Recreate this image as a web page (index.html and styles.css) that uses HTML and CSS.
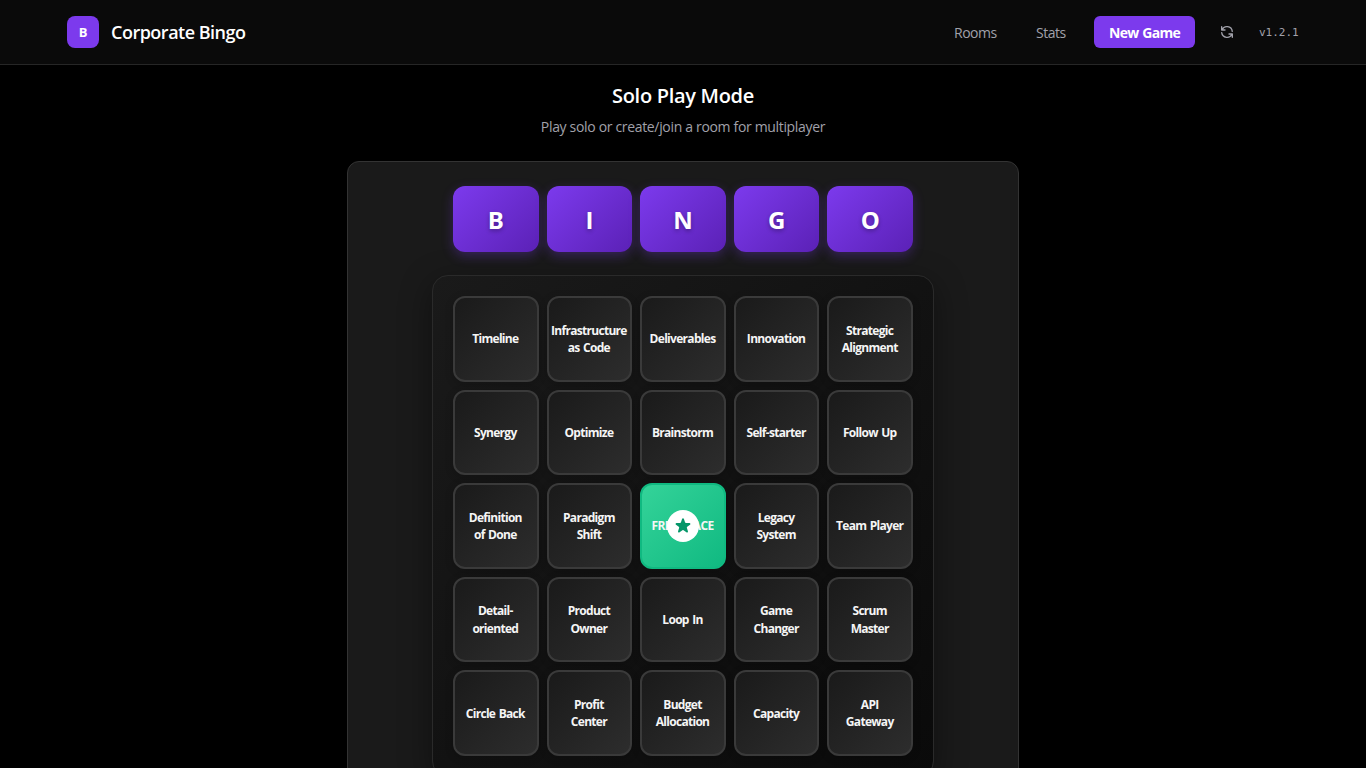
FILE: index.html
```html
<!DOCTYPE html>
<html lang="en">
<head>
<meta charset="utf-8">
<title>Corporate Bingo</title>
<link rel="stylesheet" href="styles.css">
</head>
<body>
<header class="topbar">
  <div class="brand"><span class="logo">B</span><span class="brand-name">Corporate Bingo</span></div>
  <nav class="nav">
    <a class="link rooms">Rooms</a>
    <a class="link stats">Stats</a>
    <button class="new-game"><span>New Game</span></button>
    <button class="refresh" aria-label="Refresh">
      <svg width="16" height="16" viewBox="0 0 24 24" fill="none" stroke="currentColor" stroke-width="2"><path d="M4 4v5h.582m15.356 2A8.001 8.001 0 004.582 9m0 0H9m11 11v-5h-.581m0 0a8.003 8.003 0 01-15.357-2m15.357 2H15" stroke-linecap="round" stroke-linejoin="round"/></svg>
    </button>
    <span class="version">v1.2.1</span>
  </nav>
</header>
<main class="main">
  <h1 class="title"><span>Solo Play Mode</span></h1>
  <p class="subtitle"><span>Play solo or create/join a room for multiplayer</span></p>
  <section class="panel">
    <div class="letters">
      <div class="letter">B</div><div class="letter">I</div><div class="letter">N</div><div class="letter">G</div><div class="letter">O</div>
    </div>
    <div class="board">
      <div class="cell"><span>Timeline</span></div>
      <div class="cell"><span>Infrastructure<br>as Code</span></div>
      <div class="cell"><span>Deliverables</span></div>
      <div class="cell"><span>Innovation</span></div>
      <div class="cell"><span>Strategic<br>Alignment</span></div>
      <div class="cell"><span>Synergy</span></div>
      <div class="cell"><span>Optimize</span></div>
      <div class="cell"><span>Brainstorm</span></div>
      <div class="cell"><span>Self-starter</span></div>
      <div class="cell"><span>Follow Up</span></div>
      <div class="cell"><span>Definition<br>of Done</span></div>
      <div class="cell"><span>Paradigm<br>Shift</span></div>
      <div class="cell free"><span>FREE SPACE</span>
        <div class="badge"><svg width="20" height="20" viewBox="0 0 20 20" fill="currentColor"><path d="M9.049 2.927c.3-.921 1.603-.921 1.902 0l1.07 3.292a1 1 0 00.95.69h3.462c.969 0 1.371 1.24.588 1.81l-2.8 2.034a1 1 0 00-.364 1.118l1.07 3.292c.3.921-.755 1.688-1.54 1.118l-2.8-2.034a1 1 0 00-1.175 0l-2.8 2.034c-.784.57-1.838-.197-1.539-1.118l1.07-3.292a1 1 0 00-.364-1.118L2.98 8.72c-.783-.57-.38-1.81.588-1.81h3.461a1 1 0 00.951-.69l1.07-3.292z"/></svg></div>
      </div>
      <div class="cell"><span>Legacy<br>System</span></div>
      <div class="cell"><span>Team Player</span></div>
      <div class="cell"><span>Detail-<br>oriented</span></div>
      <div class="cell"><span>Product<br>Owner</span></div>
      <div class="cell"><span>Loop In</span></div>
      <div class="cell"><span>Game<br>Changer</span></div>
      <div class="cell"><span>Scrum<br>Master</span></div>
      <div class="cell"><span>Circle Back</span></div>
      <div class="cell"><span>Profit<br>Center</span></div>
      <div class="cell"><span>Budget<br>Allocation</span></div>
      <div class="cell"><span>Capacity</span></div>
      <div class="cell"><span>API<br>Gateway</span></div>
    </div>
  </section>
</main>
</body>
</html>
```
FILE: styles.css
```css
* { box-sizing: border-box; }
body {
  margin: 0;
  height: 768px;
  overflow: hidden;
  background: #000;
  color: #fff;
  font-family: "Open Sans", "Noto Sans", sans-serif;
}
button { border: 0; padding: 0; font: inherit; color: inherit; background: none; }
.topbar {
  height: 65px;
  padding: 0 67px;
  display: flex;
  justify-content: space-between;
  align-items: center;
  background: #0a0a0a;
  border-bottom: 1px solid #262626;
}
.brand { display: flex; align-items: center; gap: 12px; }
.logo {
  width: 32px;
  height: 32px;
  border-radius: 8px;
  background: #7c3aed;
  display: flex;
  align-items: center;
  justify-content: center;
  font-size: 13px;
  font-weight: 700;
}
.brand-name { font-size: 18px; font-weight: 600; letter-spacing: -0.5px; white-space: nowrap; }
.nav { display: flex; align-items: center; color: #a1a1aa; font-size: 14px; }
.link { letter-spacing: -0.5px; white-space: nowrap; }
.rooms { width: 82px; }
.stats { width: 58px; }
.new-game {
  width: 101px;
  height: 32px;
  border-radius: 6px;
  background: #7c3aed;
  color: #fff;
  font-weight: 700;
  letter-spacing: -0.75px;
  word-spacing: 1px;
  white-space: nowrap;
}
.refresh { width: 64px; height: 32px; display: flex; align-items: center; justify-content: center; }
.version { width: 40px; font-family: "DejaVu Sans Mono", monospace; font-size: 11px; }
.main { display: flex; flex-direction: column; align-items: center; padding-top: 17px; }
.title { margin: 0; font-size: 20px; line-height: 28px; font-weight: 600; letter-spacing: -0.3px; }
.subtitle { margin: 7px 0 24px; font-size: 14px; line-height: 20px; color: #a1a1aa; letter-spacing: -0.33px; }
.panel {
  width: 672px;
  height: 650px;
  padding: 24px 84px;
  border: 1px solid #333;
  border-radius: 12px;
  background: #1a1a1a;
}
.letters { display: grid; grid-template-columns: repeat(5, 1fr); gap: 8px; margin: 0 21px 23px; }
.letter {
  height: 66px;
  border-radius: 12px;
  background: linear-gradient(135deg, #7c3aed, #5b21b6);
  box-shadow: 0 4px 12px rgba(124, 58, 237, .3);
  display: flex;
  align-items: center;
  justify-content: center;
  font-size: 24px;
  font-weight: 700;
  text-shadow: 0 2px 4px rgba(0, 0, 0, .3);
}
.board {
  height: 502px;
  padding: 20px;
  display: grid;
  grid-template-columns: repeat(5, 1fr);
  grid-template-rows: repeat(5, 1fr);
  gap: 8px;
  border: 1px solid #2a2a2a;
  border-radius: 16px;
  background: linear-gradient(135deg, #1a1a1a, #0a0a0a);
  box-shadow: 0 8px 32px rgba(0, 0, 0, .4);
}
.cell {
  position: relative;
  display: flex;
  align-items: center;
  justify-content: center;
  border: 2px solid #3a3a3a;
  border-radius: 12px;
  background: linear-gradient(135deg, #1a1a1a, #2d2d2d);
  box-shadow: 0 2px 8px rgba(0, 0, 0, .2);
  font-size: 12px;
  line-height: 17.2px;
  font-weight: 700;
  letter-spacing: -0.7px;
  word-spacing: 1px;
  text-align: center;
  white-space: nowrap;
  color: #f5f5f5;
}
.cell > span { margin-right: 1px; }
.free { border-color: #10b981; background: linear-gradient(135deg, #34d399, #10b981); }
.badge {
  position: absolute;
  inset: 0;
  width: 32px;
  height: 32px;
  margin: auto;
  border-radius: 50%;
  background: #fff;
  color: #059669;
  display: flex;
  align-items: center;
  justify-content: center;
}
```
